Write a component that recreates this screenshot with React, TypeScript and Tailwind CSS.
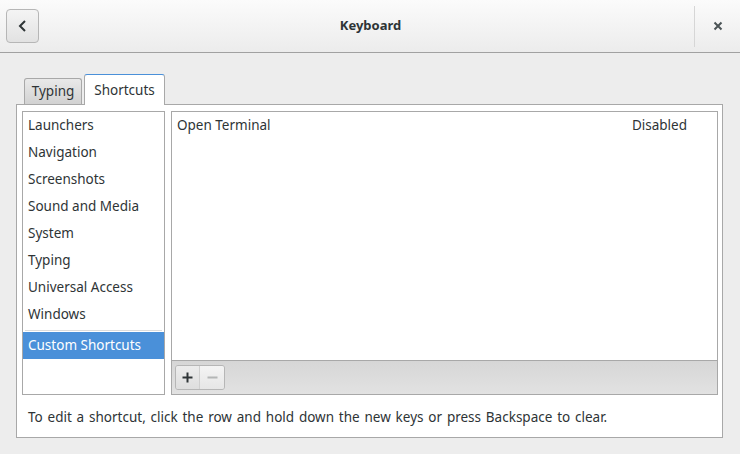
const categories = [
  "Launchers",
  "Navigation",
  "Screenshots",
  "Sound and Media",
  "System",
  "Typing",
  "Universal Access",
  "Windows",
];

export default function App() {
  return (
    <div className="w-[740px] h-[454px] bg-[#ededed] text-[#2e3436] text-[13.5px] font-['Noto_Sans',sans-serif] flex flex-col overflow-hidden">
      {/* header bar */}
      <div className="h-[53px] shrink-0 flex items-center border-b border-[#a1a1a1] bg-gradient-to-b from-[#fbfbfb] to-[#ececec]">
        <button className="ml-[6px] w-[33px] h-[34px] rounded-[4px] border border-[#b6b6b6] bg-gradient-to-b from-[#f4f4f4] to-[#e2e2e2] flex items-center justify-center">
          <svg width="12" height="14" viewBox="0 0 12 14">
            <path d="M8 2 L3 7 L8 12" fill="none" stroke="#2e3436" strokeWidth="2" />
          </svg>
        </button>
        <div className="flex-1 text-center font-bold text-[13px] pl-[8px]">Keyboard</div>
        <div className="w-px h-[41px] bg-[#d6d6d6]" />
        <div className="w-[45px] flex items-center justify-center">
          <svg width="10" height="10" viewBox="0 0 10 10">
            <path d="M1.5 1.5 L8.5 8.5 M8.5 1.5 L1.5 8.5" stroke="#4b5456" strokeWidth="2" />
          </svg>
        </div>
      </div>

      {/* notebook */}
      <div className="pl-[16px] pt-[21px]">
        <div className="flex items-end pl-[8px] h-[30px] relative z-10">
          <div className="w-[58px] h-[26px] flex items-center justify-center rounded-t-[3px] border border-b-0 border-[#a8a8a8] bg-gradient-to-b from-[#e9e9e9] to-[#d2d2d2]">
            Typing
          </div>
          <div className="w-[81px] h-[31px] -mb-px ml-[2px] flex items-center justify-center rounded-t-[3px] border border-b-0 border-[#a8a8a8] border-t-[#4a90d9] bg-white">
            Shortcuts
          </div>
        </div>
        <div className="w-[707px] h-[334px] border border-[#a8a8a8] bg-white flex flex-col">
          <div className="flex gap-[6px] pl-[5px] pt-[6px] pr-[4px]">
            <div className="w-[143px] h-[284px] border border-[#a8a8a8] flex flex-col">
              {categories.map((c) => (
                <div key={c} className="h-[27px] px-[5px] flex items-center">
                  {c}
                </div>
              ))}
              <div className="mt-[2px] mx-[2px] h-px bg-[#dcdcdc]" />
              <div className="mt-[1px] h-[27px] px-[5px] flex items-center bg-[#4a90d9] text-white">
                Custom Shortcuts
              </div>
            </div>
            <div className="flex-1 h-[284px] border border-[#a8a8a8] flex flex-col">
              <div className="h-[27px] pl-[5px] pr-[30px] flex items-center justify-between">
                <span>Open Terminal</span>
                <span>Disabled</span>
              </div>
              <div className="flex-1" />
              <div className="h-[34px] border-t border-[#a8a8a8] bg-gradient-to-b from-[#d6d6d6] to-[#e2e2e2] flex items-center pl-[3px]">
                <div className="flex h-[25px] rounded-[3px] border border-[#b6b6b6] overflow-hidden">
                  <div className="w-[24px] flex items-center justify-center bg-gradient-to-b from-[#ececec] to-[#dedede] border-r border-[#cfcfcf]">
                    <svg width="11" height="11" viewBox="0 0 11 11">
                      <path d="M5.5 0.5 V10.5 M0.5 5.5 H10.5" stroke="#2e3436" strokeWidth="2" />
                    </svg>
                  </div>
                  <div className="w-[24px] flex items-center justify-center bg-gradient-to-b from-[#f4f4f4] to-[#e6e6e6]">
                    <svg width="11" height="11" viewBox="0 0 11 11">
                      <path d="M0.5 5.5 H10.5" stroke="#b4b6b6" strokeWidth="2" />
                    </svg>
                  </div>
                </div>
              </div>
            </div>
          </div>
          <div className="pl-[11px] pt-[12px] [word-spacing:1.3px]">
            To edit a shortcut, click the row and hold down the new keys or press Backspace to clear.
          </div>
        </div>
      </div>
    </div>
  );
}
